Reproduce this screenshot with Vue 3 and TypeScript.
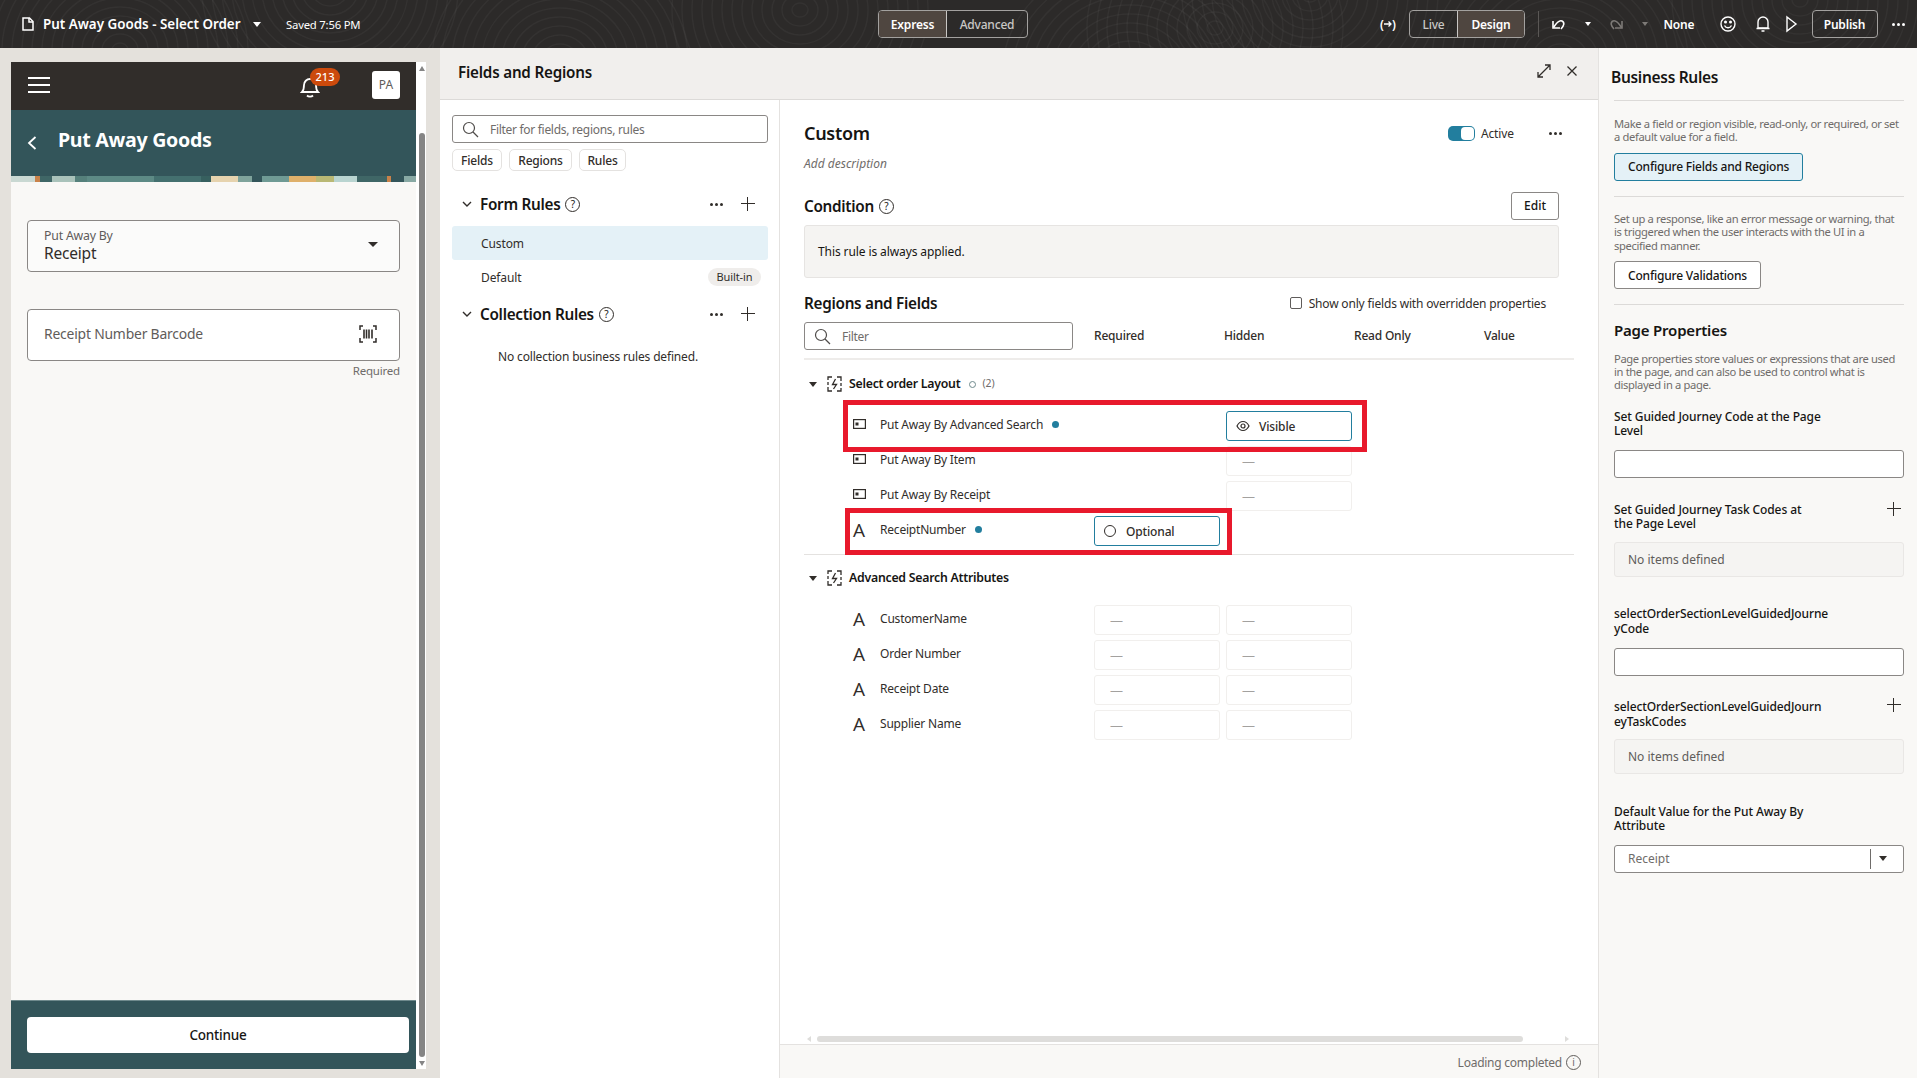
<script setup lang="ts">
type Field = { name: string; kind: 'field' | 'text'; mark?: boolean; required?: string; hidden?: string }

const layoutFields: Field[] = [
  { name: 'Put Away By Advanced Search', kind: 'field', mark: true, hidden: 'Visible' },
  { name: 'Put Away By Item', kind: 'field', hidden: '-' },
  { name: 'Put Away By Receipt', kind: 'field', hidden: '-' },
  { name: 'ReceiptNumber', kind: 'text', mark: true, required: 'Optional' },
]

const searchFields: Field[] = [
  { name: 'CustomerName', kind: 'text', required: '-', hidden: '-' },
  { name: 'Order Number', kind: 'text', required: '-', hidden: '-' },
  { name: 'Receipt Date', kind: 'text', required: '-', hidden: '-' },
  { name: 'Supplier Name', kind: 'text', required: '-', hidden: '-' },
]

// whorls for the header texture
const whorlCenters = [
  [120, 50], [330, -10], [560, 60], [800, 10], [1130, 75], [1215, 28], [1310, -5], [1560, 60], [1800, 0],
]
const whorls = whorlCenters.flatMap(([cx, cy]) =>
  Array.from({ length: 13 }, (_, i) => ({ cx, cy, rx: 8 + i * 10, ry: 7 + i * 9 })),
)

const leaves = [
  { x: 0, w: 24, c: '#c9d8d2' }, { x: 24, w: 5, c: '#c9824a' }, { x: 29, w: 12, c: '#3f6666' },
  { x: 41, w: 23, c: '#a9c2ba' }, { x: 64, w: 12, c: '#55807b' }, { x: 76, w: 67, c: '#5d8a85' },
  { x: 143, w: 47, c: '#44706f' }, { x: 190, w: 10, c: '#37605f' }, { x: 200, w: 27, c: '#e6d3ae' },
  { x: 227, w: 14, c: '#7fa39b' }, { x: 241, w: 10, c: '#33555a' }, { x: 251, w: 27, c: '#6f9a94' },
  { x: 278, w: 27, c: '#dfb06a' }, { x: 305, w: 18, c: '#b9b874' }, { x: 323, w: 23, c: '#b9d4d0' },
  { x: 346, w: 30, c: '#3f6666' }, { x: 376, w: 4, c: '#c9824a' }, { x: 380, w: 13, c: '#33555a' },
  { x: 393, w: 12, c: '#88a9a4' },
]
</script>

<template>
  <div class="app">
    <header class="topbar">
      <svg class="texture" width="1917" height="48">
        <ellipse
          v-for="(w, i) in whorls"
          :key="i"
          :cx="w.cx"
          :cy="w.cy"
          :rx="w.rx"
          :ry="w.ry"
          fill="none"
          stroke="#fff"
          stroke-opacity="0.04"
          stroke-width="1.5"
        />
      </svg>
      <div class="top-left">
        <svg class="doc" width="12" height="14" viewBox="0 0 12 14" fill="none" stroke="#fff" stroke-width="1.5">
          <path d="M1 1h6.5L11 4.5V13H1z" /><path d="M7 1v4h4" />
        </svg>
        <span class="page-name">Put Away Goods - Select Order</span>
        <i class="caret white page-caret"></i>
        <span class="saved">Saved 7:56 PM</span>
      </div>
      <div class="seg mode">
        <span class="seg-on express">Express</span>
        <span class="seg-off advanced">Advanced</span>
      </div>
      <div class="top-right">
        <span class="bracket">(<svg width="8" height="8" viewBox="0 0 8 8" fill="none" stroke="#fff" stroke-width="1.3"><path d="M0 4h7M4.500 1.500L7 4 4.500 6.500" /></svg>)</span>
        <div class="seg view">
          <span class="seg-off live">Live</span>
          <span class="seg-on design">Design</span>
        </div>
        <i class="top-sep"></i>
        <svg class="undo" width="16" height="14" viewBox="0 0 16 14" fill="none" stroke="#fff" stroke-width="1.6">
          <path d="M2 4v7h7" /><path d="M2.500 10.500C6 5 9 3 11 4c3 1.500 2 5-1 8" />
        </svg>
        <i class="caret tiny"></i>
        <svg class="redo" width="16" height="14" viewBox="0 0 16 14" fill="none" stroke="#7d7a77" stroke-width="1.6">
          <path d="M14 4v7H7" /><path d="M13.500 10.500C10 5 7 3 5 4c-3 1.500-2 5 1 8" />
        </svg>
        <i class="caret tiny dim"></i>
        <span class="none">None</span>
        <svg class="smile" width="18" height="18" viewBox="0 0 18 18" fill="none" stroke="#fff" stroke-width="1.4">
          <circle cx="9" cy="9" r="7" /><path d="M5.500 10.500c1.500 3 5.500 3 7 0" />
          <circle cx="6.500" cy="7" r=".8" fill="#fff" /><circle cx="11.500" cy="7" r=".8" fill="#fff" />
        </svg>
        <svg class="bell-top" width="16" height="18" viewBox="0 0 16 18" fill="none" stroke="#fff" stroke-width="1.4">
          <path d="M3 13V7a5 5 0 0 1 10 0v6z" /><path d="M1.500 13.500h13M6.500 16h3" />
        </svg>
        <svg class="play" width="13" height="18" viewBox="0 0 13 18" fill="none" stroke="#fff" stroke-width="1.4">
          <path d="M2 2l9 7-9 7z" />
        </svg>
        <span class="publish">Publish</span>
        <span class="top-dots"><i></i><i></i><i></i></span>
      </div>
    </header>

    <main class="main">
      <section class="preview">
        <div class="phone">
          <div class="phone-main">
            <div class="phone-nav">
              <span class="burger"><i></i><i></i><i></i></span>
              <span class="bell-wrap">
                <svg width="20" height="22" viewBox="0 0 20 22" fill="none" stroke="#fff" stroke-width="1.8">
                  <path d="M2 16c2-2 2-4 2-7a6 6 0 0 1 12 0c0 3 0 5 2 7z" /><path d="M7 19.500c1.500 1.500 4.500 1.500 6 0" />
                </svg>
                <span class="badge">213</span>
              </span>
              <span class="avatar">PA</span>
            </div>
            <div class="phone-title">
              <svg width="10" height="14" viewBox="0 0 10 14" fill="none" stroke="#fff" stroke-width="1.8">
                <path d="M8.500 1L2 7l6.500 6" />
              </svg>
              <span>Put Away Goods</span>
            </div>
            <svg class="leaf-strip" width="405" height="6">
              <rect v-for="l in leaves" :key="l.x" :x="l.x" y="0" :width="l.w" height="6" :fill="l.c" />
            </svg>
            <div class="phone-body">
              <div class="m-field m-select">
                <div>
                  <div class="m-label">Put Away By</div>
                  <div class="m-value">Receipt</div>
                </div>
                <i class="caret dark big"></i>
              </div>
              <div class="m-field m-input">
                <span class="m-place">Receipt Number Barcode</span>
                <svg width="18" height="18" viewBox="0 0 18 18" fill="none" stroke="#312d2a" stroke-width="1.5">
                  <path d="M1 5V1h3M14 1h3v4M1 13v4h3M14 17h3v-4" />
                  <path d="M5 4.500v9M7.500 4.500v9M10 4.500v9M13 4.500v9" stroke-width="1.600" />
                </svg>
              </div>
              <div class="m-req">Required</div>
            </div>
            <div class="phone-foot"><span class="continue">Continue</span></div>
          </div>
          <div class="phone-scroll">
            <i class="arr up"></i>
            <i class="thumb"></i>
            <i class="arr down"></i>
          </div>
        </div>
      </section>

      <section class="fields">
        <div class="fields-head">
          <span class="fields-title">Fields and Regions</span>
          <svg class="expand" width="16" height="16" viewBox="0 0 16 16" fill="none" stroke="#312d2a" stroke-width="1.3">
            <path d="M2 14L14 2M9 2h5v5M2 9v5h5" />
          </svg>
          <svg class="close" width="12" height="12" viewBox="0 0 12 12" fill="none" stroke="#312d2a" stroke-width="1.3">
            <path d="M1.500 1.500l9 9M10.500 1.500l-9 9" />
          </svg>
        </div>
        <div class="fields-body">
          <aside class="rules">
            <div class="search">
              <svg width="17" height="17" viewBox="0 0 17 17" fill="none" stroke="#4f4c4a" stroke-width="1.2">
                <circle cx="7" cy="7" r="5.500" /><path d="M11 11l5 5" />
              </svg>
              <span>Filter for fields, regions, rules</span>
            </div>
            <div class="chips">
              <span class="chip c-fields">Fields</span>
              <span class="chip c-regions">Regions</span>
              <span class="chip c-rules">Rules</span>
            </div>
            <div class="rule-head first">
              <svg width="10" height="7" viewBox="0 0 10 7" fill="none" stroke="#312d2a" stroke-width="1.4"><path d="M1 1l4 4 4-4" /></svg>
              <span class="rule-title">Form Rules</span>
              <span class="help">?</span>
              <span class="dots"><i></i><i></i><i></i></span>
              <span class="plus"></span>
            </div>
            <div class="rule-row active">Custom</div>
            <div class="rule-row">Default <span class="built">Built-in</span></div>
            <div class="rule-head second">
              <svg width="10" height="7" viewBox="0 0 10 7" fill="none" stroke="#312d2a" stroke-width="1.4"><path d="M1 1l4 4 4-4" /></svg>
              <span class="rule-title">Collection Rules</span>
              <span class="help">?</span>
              <span class="dots"><i></i><i></i><i></i></span>
              <span class="plus"></span>
            </div>
            <div class="no-rules">No collection business rules defined.</div>
          </aside>

          <div class="detail">
            <div class="detail-scroll">
              <div class="detail-top">
                <span class="custom-title">Custom</span>
                <span class="toggle"><i></i></span>
                <span class="active-label">Active</span>
                <span class="dots detail-dots"><i></i><i></i><i></i></span>
              </div>
              <div class="add-desc">Add description</div>
              <div class="cond-head">
                <span class="sec-title">Condition</span>
                <span class="help">?</span>
                <span class="edit">Edit</span>
              </div>
              <div class="cond-box">This rule is always applied.</div>
              <div class="reg-head">
                <span class="sec-title">Regions and Fields</span>
                <span class="check"><i></i>Show only fields with overridden properties</span>
              </div>
              <div class="filter-row">
                <div class="search filter">
                  <svg width="17" height="17" viewBox="0 0 17 17" fill="none" stroke="#4f4c4a" stroke-width="1.2">
                    <circle cx="7" cy="7" r="5.500" /><path d="M11 11l5 5" />
                  </svg>
                  <span>Filter</span>
                </div>
                <span class="col">Required</span>
                <span class="col">Hidden</span>
                <span class="col">Read Only</span>
                <span class="col">Value</span>
              </div>

              <div class="tree">
                <div class="group-row">
                  <i class="caret dark"></i>
                  <svg width="15" height="16" viewBox="0 0 15 16" fill="none" stroke="#312d2a" stroke-width="1.3">
                    <path d="M1 4V1h4M10 1h4v4M1 11v4h4M10 15h4v-3M1 6v3M14 7v3" />
                    <path d="M8.500 3L5.500 8.500h4L6.500 13" />
                  </svg>
                  <span class="group-name">Select order Layout</span>
                  <span class="ring"></span>
                  <span class="count">(2)</span>
                </div>
                <div v-for="f in layoutFields" :key="f.name" class="f-row">
                  <div class="f-name">
                    <span class="f-icon">
                      <span v-if="f.kind === 'text'" class="a-icon">A</span>
                      <svg v-else width="13" height="10" viewBox="0 0 13 10" fill="none" stroke="#312d2a" stroke-width="1.2">
                        <rect x=".6" y=".6" width="11.800" height="8.800" /><rect x="2.500" y="3.500" width="3" height="3" fill="#312d2a" stroke="none" />
                      </svg>
                    </span>
                    {{ f.name }}
                    <i v-if="f.mark" class="mark"></i>
                  </div>
                  <div class="cell-wrap">
                    <span v-if="f.required === 'Optional'" class="cell set"><i class="opt-ring"></i>Optional</span>
                  </div>
                  <div class="cell-wrap">
                    <span v-if="f.hidden === 'Visible'" class="cell set">
                      <svg width="14" height="12" viewBox="0 0 14 12" fill="none" stroke="#312d2a" stroke-width="1.2">
                        <path d="M1 6c3-6 9-6 12 0-3 6-9 6-12 0z" /><circle cx="7" cy="6" r="2" />
                      </svg>Visible
                    </span>
                    <span v-else-if="f.hidden" class="cell empty"><b>—</b></span>
                  </div>
                </div>
                <div class="tree-sep"></div>
                <div class="group-row second-group">
                  <i class="caret dark"></i>
                  <svg width="15" height="16" viewBox="0 0 15 16" fill="none" stroke="#312d2a" stroke-width="1.3">
                    <path d="M1 4V1h4M10 1h4v4M1 11v4h4M10 15h4v-3M1 6v3M14 7v3" />
                    <path d="M8.500 3L5.500 8.500h4L6.500 13" />
                  </svg>
                  <span class="group-name">Advanced Search Attributes</span>
                </div>
                <div v-for="f in searchFields" :key="f.name" class="f-row">
                  <div class="f-name">
                    <span class="f-icon"><span class="a-icon">A</span></span>
                    {{ f.name }}
                  </div>
                  <div class="cell-wrap"><span class="cell empty"><b>—</b></span></div>
                  <div class="cell-wrap"><span class="cell empty"><b>—</b></span></div>
                </div>
                <!-- red review annotations over the table -->
                <div class="callout call-a"></div>
                <div class="callout call-b"></div>
              </div>
            </div>
            <div class="h-scroll">
              <i class="h-arrow left"></i>
              <i class="h-thumb"></i>
              <i class="h-arrow right"></i>
            </div>
            <div class="status">
              Loading completed
              <span class="info">i</span>
            </div>
          </div>
        </div>
      </section>

      <aside class="side">
        <h2 class="side-title">Business Rules</h2>
        <div class="side-box">
          <p>Make a field or region visible, read-only, or required, or set a default value for a field.</p>
          <span class="btn primary">Configure Fields and Regions</span>
        </div>
        <div class="side-box">
          <p>Set up a response, like an error message or warning, that is triggered when the user interacts with the UI in a specified manner.</p>
          <span class="btn">Configure Validations</span>
        </div>
        <h2 class="page-props">Page Properties</h2>
        <p class="props-desc">Page properties store values or expressions that are used in the page, and can also be used to control what is displayed in a page.</p>
        <div class="prop-label gj">Set Guided Journey Code at the Page<br />Level</div>
        <div class="prop-input"></div>
        <div class="prop-head first-head">
          <div class="prop-label">Set Guided Journey Task Codes at<br />the Page Level</div>
          <span class="plus"></span>
        </div>
        <div class="no-items">No items defined</div>
        <div class="prop-label wide">selectOrderSectionLevelGuidedJourne<br />yCode</div>
        <div class="prop-input"></div>
        <div class="prop-head">
          <div class="prop-label wide-t">selectOrderSectionLevelGuidedJourn<br />eyTaskCodes</div>
          <span class="plus"></span>
        </div>
        <div class="no-items">No items defined</div>
        <div class="prop-label def">Default Value for the Put Away By<br />Attribute</div>
        <div class="prop-input prop-select">
          <span>Receipt</span>
          <em><i class="caret dark"></i></em>
        </div>
      </aside>
    </main>
  </div>
</template>

<style scoped>
.app {
  width: 1917px;
  height: 1078px;
  display: flex;
  flex-direction: column;
  overflow: hidden;
  font-family: "Noto Sans", "Open Sans", sans-serif;
  font-size: 12px;
  color: #161513;
  background: #fff;
}

i { display: block; font-style: normal; }

.caret {
  width: 0;
  height: 0;
  border-left: 4px solid transparent;
  border-right: 4px solid transparent;
  border-top: 5px solid #fff;
}
.caret.dark { border-top-color: #312d2a; }
.caret.big { border-left-width: 5px; border-right-width: 5px; border-top-width: 5px; }
.caret.tiny { border-left-width: 3px; border-right-width: 3px; border-top-width: 4px; }
.caret.dim { border-top-color: #7d7a77; }

/* top bar */
.topbar {
  position: relative;
  height: 48px;
  flex: none;
  background: #2c2a29;
  color: #fff;
  display: flex;
  align-items: center;
  overflow: hidden;
}
.texture { position: absolute; left: 0; top: 0; }
.top-left, .mode, .top-right { position: relative; }
.top-left { display: flex; align-items: center; width: 878px; padding-left: 22px; box-sizing: border-box; }
.page-name { margin-left: 9px; font-size: 13.400px; font-weight: 600; width: 206px; white-space: nowrap; }
.page-caret { margin-left: 4px; }
.saved { margin-left: 25px; font-size: 11.300px; letter-spacing: -0.2px; }
.seg {
  display: flex;
  height: 28px;
  box-sizing: border-box;
  border: 1px solid #a3a19f;
  border-radius: 4px;
  overflow: hidden;
  font-size: 12px;
  font-weight: 600;
  letter-spacing: -0.2px;
}
.seg span { display: flex; align-items: center; justify-content: center; }
.seg-on { background: #4f4640; color: #fff; }
.seg-off { color: #c9c7c5; font-weight: 500; }
.express { width: 67px; border-right: 1px solid #c9c7c5; }
.advanced { width: 80px; }
.top-right { margin-left: 352px; display: flex; align-items: center; }
.bracket { width: 20px; font-size: 12px; font-weight: 600; white-space: nowrap; display: flex; align-items: center; }
.view { margin-left: 9px; }
.live { width: 47px; }
.design { width: 66px; border-left: 1px solid #c9c7c5; }
.top-sep { width: 1px; height: 26px; background: #5a5755; margin-left: 13px; }
.undo { margin-left: 12px; }
.top-right .caret.tiny { margin-left: 17.500px; }
.redo { margin-left: 17.500px; }
.none { margin-left: 16px; font-size: 12px; font-weight: 600; letter-spacing: -0.2px; width: 32px; }
.smile { margin-left: 23px; }
.bell-top { margin-left: 18px; }
.play { margin-left: 14px; }
.publish {
  margin-left: 14px;
  width: 66px;
  height: 28px;
  border: 1px solid #a3a19f;
  border-radius: 4px;
  box-sizing: border-box;
  display: flex;
  align-items: center;
  justify-content: center;
  font-size: 12px;
  font-weight: 600;
  letter-spacing: -0.2px;
}
.top-dots { margin-left: 14px; display: flex; gap: 2px; }
.top-dots i { width: 3px; height: 3px; border-radius: 50%; background: #fff; }

.main { flex: 1; min-height: 0; display: flex; }

/* mobile preview */
.preview {
  width: 440px;
  flex: none;
  box-sizing: border-box;
  padding: 14px 14px 9px 11px;
  background: #e4e1dc;
  display: flex;
}
.phone { flex: 1; display: flex; min-width: 0; }
.phone-main { width: 405px; display: flex; flex-direction: column; background: #f9f8f6; }
.phone-nav {
  height: 48px;
  flex: none;
  background: #312d2a;
  display: flex;
  align-items: center;
  padding: 0 16px 0 17px;
}
.burger { display: flex; flex-direction: column; gap: 5px; width: 22px; margin-bottom: 2px; }
.burger i { height: 2px; background: #fff; }
.bell-wrap { position: relative; margin-left: 250px; width: 20px; height: 22px; margin-top: 2px; }
.badge {
  position: absolute;
  left: 10px;
  top: -8px;
  width: 30px;
  height: 18px;
  border-radius: 9px;
  background: #cc4a0c;
  font-size: 11px;
  font-weight: 500;
  text-align: center;
  line-height: 18px;
  color: #fff;
}
.avatar {
  margin-left: auto;
  width: 28px;
  height: 28px;
  border-radius: 3px;
  background: #fff;
  color: #5f5c5a;
  font-size: 12px;
  text-align: center;
  line-height: 28px;
  margin-bottom: 2px;
}
.phone-title {
  height: 66px;
  flex: none;
  background: #33555a;
  color: #fff;
  display: flex;
  align-items: center;
  padding-left: 16px;
  font-size: 19.600px;
  font-weight: 700;
  letter-spacing: -0.3px;
}
.phone-title svg { margin-right: 21px; }
.phone-title span { margin-top: -8px; }
.leaf-strip { display: block; flex: none; }
.phone-body { flex: 1; padding: 38px 16px 0; }
.m-field {
  height: 52px;
  box-sizing: border-box;
  border: 1px solid #8a8785;
  border-radius: 4px;
  background: #fff;
  padding: 0 16px;
  display: flex;
  align-items: center;
  justify-content: space-between;
}
.m-select { background: #fbfbfa; }
.m-label { font-size: 12.300px; color: #5f5c5a; line-height: 14px; letter-spacing: -0.2px; }
.m-value { font-size: 15.500px; line-height: 20px; letter-spacing: -0.2px; color: #312d2a; }
.m-select .caret { margin-right: 5px; margin-top: -4px; }
.m-input { margin-top: 37px; }
.m-place { font-size: 13.900px; color: #5f5c5a; letter-spacing: -0.2px; margin-top: -3px; }
.m-input svg { margin-right: 6px; margin-top: -2px; }
.m-req { text-align: right; margin-top: 2px; font-size: 11.500px; color: #6f6c6a; letter-spacing: -0.2px; }
.phone-foot {
  height: 69px;
  flex: none;
  box-sizing: border-box;
  background: #33555a;
  border-top: 1px solid #6f8a8d;
  padding: 16px 7px 0 16px;
}
.continue {
  display: block;
  height: 36px;
  border-radius: 4px;
  background: #fff;
  color: #161513;
  text-align: center;
  line-height: 36px;
  font-size: 13.500px;
  font-weight: 500;
  letter-spacing: -0.2px;
}
.phone-scroll {
  width: 10px;
  background: #fff;
  display: flex;
  flex-direction: column;
  align-items: center;
  padding-top: 4px;
  padding-left: 2px;
  box-sizing: border-box;
}
.thumb { flex: 1; width: 6px; margin: 62px 0 4px; background: #858585; border-radius: 3px; }
.arr { width: 0; height: 0; border-left: 3px solid transparent; border-right: 3px solid transparent; }
.arr.up { border-bottom: 5px solid #858585; }
.arr.down { border-top: 5px solid #858585; margin-bottom: 3px; }

/* fields panel */
.fields { width: 1158px; flex: none; display: flex; flex-direction: column; min-height: 0; }
.fields-head {
  height: 52px;
  flex: none;
  box-sizing: border-box;
  background: #f1efed;
  border-bottom: 1px solid #dcdad8;
  display: flex;
  align-items: center;
  padding-left: 18px;
}
.fields-title { font-size: 15.200px; font-weight: 600; letter-spacing: -0.2px; margin-top: -3px; }
.expand { margin-left: auto; margin-top: -5px; }
.close { margin-left: 14px; margin-right: 20px; margin-top: -5px; }
.fields-body { flex: 1; display: flex; min-height: 0; }

.rules {
  width: 340px;
  flex: none;
  box-sizing: border-box;
  border-right: 1px solid #e4e2e0;
  padding: 15px 11px 0 12px;
}
.search {
  height: 28px;
  box-sizing: border-box;
  border: 1px solid #8a8785;
  border-radius: 3px;
  background: #fff;
  display: flex;
  align-items: center;
  padding-left: 9px;
  font-size: 12px;
  color: #6f6c6a;
  letter-spacing: -0.3px;
}
.search span { margin-left: 11px; }
.chips { display: flex; gap: 7px; margin-top: 6px; }
.chip {
  height: 22px;
  box-sizing: border-box;
  border: 1px solid #e4e2e0;
  border-radius: 5px;
  display: flex;
  align-items: center;
  justify-content: center;
  font-size: 12px;
  font-weight: 500;
  letter-spacing: -0.2px;
  color: #312d2a;
}
.c-fields { width: 50px; }
.c-regions { width: 63px; }
.c-rules { width: 47px; }
.rule-head { display: flex; align-items: center; height: 24px; padding-left: 10px; }
.rule-head.first { margin-top: 21px; }
.rule-head.second { margin-top: 8px; }
.rule-title { margin-left: 8px; font-size: 15.300px; font-weight: 600; letter-spacing: -0.3px; }
.help {
  width: 13px;
  height: 13px;
  margin-left: 5px;
  border: 1px solid #312d2a;
  border-radius: 50%;
  font-size: 10px;
  line-height: 13px;
  text-align: center;
  font-weight: 400;
  flex: none;
}
.dots { display: flex; gap: 2px; }
.dots i { width: 3px; height: 3px; border-radius: 50%; background: #312d2a; }
.rule-head .dots { margin-left: auto; }
.plus {
  position: relative;
  width: 14px;
  height: 14px;
  display: block;
  flex: none;
  background:
    linear-gradient(#312d2a, #312d2a) center / 14px 1.400px no-repeat,
    linear-gradient(#312d2a, #312d2a) center / 1.400px 14px no-repeat;
}
.rule-head .plus { margin-left: 18px; margin-right: 13px; }
.rule-row {
  height: 34px;
  display: flex;
  align-items: center;
  justify-content: space-between;
  padding: 0 7px 0 29px;
  border-radius: 3px;
  font-size: 12px;
  letter-spacing: -0.1px;
  color: #312d2a;
}
.rule-row.active { background: #e4f1f7; margin-top: 10px; }
.built {
  width: 53px;
  height: 18px;
  border-radius: 9px;
  background: #efedeb;
  font-size: 11px;
  text-align: center;
  line-height: 18px;
}
.no-rules { margin-top: 22px; text-align: center; font-size: 12px; letter-spacing: -0.17px; padding-right: 24px; color: #312d2a; }

.detail { flex: 1; min-width: 0; display: flex; flex-direction: column; }
.detail-scroll { flex: 1; min-height: 0; padding: 0 24px 0 24px; }
.detail-top { display: flex; align-items: center; height: 26px; margin-top: 20px; }
.custom-title { font-size: 18px; font-weight: 600; letter-spacing: -0.3px; }
.toggle {
  margin-left: auto;
  width: 27px;
  height: 15px;
  border-radius: 5px;
  background: #227e9e;
  position: relative;
}
.toggle i { position: absolute; right: 1px; top: 1px; width: 13px; height: 13px; border-radius: 4px; background: #fff; }
.active-label { margin-left: 6px; font-size: 12px; letter-spacing: -0.1px; color: #312d2a; }
.detail-dots { margin-left: 35px; margin-right: 12px; }
.add-desc { margin-top: 10px; font-size: 12px; line-height: 16px; font-style: italic; color: #6f6c6a; }
.cond-head { display: flex; align-items: center; height: 28px; margin-top: 20px; margin-right: 15px; }
.sec-title { font-size: 15.300px; font-weight: 600; letter-spacing: -0.3px; }
.edit {
  margin-left: auto;
  width: 48px;
  height: 28px;
  box-sizing: border-box;
  border: 1px solid #8a8785;
  border-radius: 3px;
  font-size: 12px;
  font-weight: 500;
  text-align: center;
  line-height: 26px;
}
.cond-box {
  margin-top: 5px;
  height: 53px;
  box-sizing: border-box;
  border: 1px solid #e6e4e2;
  border-radius: 3px;
  background: #f5f4f2;
  padding-left: 13px;
  display: flex;
  align-items: center;
  font-size: 12px;
  letter-spacing: -0.1px;
  width: 755px;
}
.reg-head { display: flex; align-items: center; height: 22px; margin-top: 14px; }
.check { margin-left: auto; display: flex; align-items: center; font-size: 12px; letter-spacing: -0.17px; color: #312d2a; margin-right: 28px; }
.check i { width: 12px; height: 12px; box-sizing: border-box; border: 1.500px solid #5f5c5a; border-radius: 2px; margin-right: 7px; }
.filter-row {
  display: flex;
  align-items: center;
  margin-top: 8px;
  padding-bottom: 8px;
  border-bottom: 2px solid #eeecea;
}
.search.filter { width: 269px; flex: none; }
.col { width: 130px; font-size: 12px; font-weight: 500; letter-spacing: -0.2px; color: #312d2a; flex: none; margin-bottom: 2px; }
.col:nth-child(2) { margin-left: 21px; }
.tree { position: relative; padding-top: 10px; }
.group-row { display: flex; align-items: center; height: 28px; padding-left: 5px; }
.group-row svg { margin-left: 10px; }
.group-name { margin-left: 7px; font-size: 12.300px; font-weight: 600; letter-spacing: -0.25px; margin-bottom: 2px; }
.ring { width: 7px; height: 7px; box-sizing: border-box; border: 1px solid #6f8a8d; border-radius: 50%; margin-left: 9px; }
.count { margin-left: 6px; font-size: 10.500px; color: #6f6c6a; margin-bottom: 2px; }
.f-row { display: grid; grid-template-columns: 284px 126px 126px; column-gap: 6px; height: 35px; }
.f-name { display: flex; align-items: center; padding-left: 49px; font-size: 12px; letter-spacing: -0.2px; color: #312d2a; height: 26px; }
.f-icon { width: 27px; flex: none; display: flex; align-items: center; }
.a-icon { font-size: 19px; font-weight: 400; line-height: 1; color: #312d2a; margin-top: 2px; font-family: "Open Sans", sans-serif; }
.mark { width: 7px; height: 7px; border-radius: 50%; background: #227e9e; margin-left: 9px; }
.cell-wrap { height: 30px; }
.group-row + .f-row { margin-top: 13px; }
.cell {
  width: 126px;
  height: 30px;
  box-sizing: border-box;
  display: flex;
  align-items: center;
  border-radius: 3px;
  font-size: 12px;
  letter-spacing: -0.15px;
  padding-left: 9px;
}
.cell svg { margin-right: 9px; }
.cell.set { border: 1px solid #227e9e; background: #fff; font-weight: 500; color: #312d2a; }
.cell.empty { border: 1px solid #f1efed; padding-left: 15px; }
.cell.empty b { color: #a3a19f; font-weight: 400; font-size: 13px; }
.opt-ring { width: 12px; height: 12px; box-sizing: border-box; border: 1.300px solid #312d2a; border-radius: 50%; margin-right: 10px; }
.tree-sep { height: 1px; background: #e4e2e0; margin-top: 3px; }
.second-group { margin-top: 9px; }
.callout {
  position: absolute;
  box-sizing: border-box;
  border: 5px solid #e8192c;
  pointer-events: none;
}
.call-a { left: 39px; top: 40px; width: 524px; height: 52px; }
.call-b { left: 41px; top: 148px; width: 387px; height: 47px; }

.h-scroll { flex: none; height: 9px; position: relative; display: flex; align-items: center; padding: 0 29px 0 27px; margin-bottom: 1px; gap: 6px; }
.h-thumb { width: 706px; height: 6px; border-radius: 3px; background: #dedddb; }
.h-arrow { width: 0; height: 0; border-top: 3px solid transparent; border-bottom: 3px solid transparent; }
.h-arrow.left { border-right: 4px solid #dedddb; }
.h-arrow.right { border-left: 4px solid #dedddb; margin-left: auto; }
.status {
  flex: none;
  height: 34px;
  box-sizing: border-box;
  border-top: 1px solid #e4e2e0;
  background: #f9f8f6;
  display: flex;
  align-items: center;
  justify-content: flex-end;
  padding: 1px 17px 0 0;
  font-size: 12px;
  letter-spacing: -0.25px;
  color: #6f6c6a;
}
.info {
  width: 13px;
  height: 13px;
  margin-left: 4px;
  border: 1px solid #5f5c5a;
  border-radius: 50%;
  font-size: 10px;
  line-height: 13px;
  text-align: center;
}

/* right side */
.side {
  flex: 1;
  min-width: 0;
  box-sizing: border-box;
  background: #f9f8f6;
  border-left: 1px solid #e4e2e0;
  padding: 0 13px 0 15px;
}
.side-title { margin: 19px 0 0 -3px; font-size: 15.500px; line-height: 20px; font-weight: 600; letter-spacing: -0.3px; }
.side-box { border-top: 1px solid #dcdad8; margin-top: 0; padding-bottom: 15px; }
.side-title + .side-box { margin-top: 13px; }
.side-box p { margin: 16px 0 9px; font-size: 11.200px; line-height: 13.400px; letter-spacing: -0.36px; color: #6f6c6a; }
.btn {
  display: inline-flex;
  align-items: center;
  height: 28px;
  box-sizing: border-box;
  border: 1px solid #8a8785;
  border-radius: 3px;
  padding: 0 13px;
  font-size: 12px;
  font-weight: 500;
  letter-spacing: -0.2px;
  background: #fff;
}
.btn.primary { background: #e4f1f7; border-color: #227e9e; }
.side-box + .side-box p { margin-top: 15px; }
.page-props { margin: 0; padding-top: 15px; border-top: 1px solid #dcdad8; font-size: 15px; line-height: 20px; font-weight: 600; letter-spacing: -0.2px; }
.props-desc { margin: 12px 0 0; font-size: 11.200px; line-height: 13px; letter-spacing: -0.36px; color: #6f6c6a; }
.prop-label { font-size: 12px; line-height: 14px; font-weight: 500; letter-spacing: -0.1px; color: #161513; }
.prop-label.gj { margin-top: 19px; }
.prop-input { margin-top: 12px; height: 28px; box-sizing: border-box; border: 1px solid #8a8785; border-radius: 3px; background: #fff; }
.prop-head { display: flex; justify-content: space-between; margin-top: 23px; align-items: flex-start; }
.prop-head.first-head { margin-top: 25px; }
.prop-head .plus { margin-top: -1px; margin-right: 3px; }
.no-items {
  margin-top: 10.500px;
  height: 35px;
  box-sizing: border-box;
  border: 1px solid #e9e7e5;
  border-radius: 3px;
  background: #f5f4f2;
  padding-left: 13px;
  display: flex;
  align-items: center;
  font-size: 12px;
  color: #5f5c5a;
}
.prop-label.wide { margin-top: 29px; line-height: 15px; }
.prop-label.wide-t { line-height: 15px; }
.prop-label.def { margin-top: 30.500px; }
.prop-select { display: flex; align-items: center; justify-content: space-between; padding-left: 13px; font-size: 12px; color: #6f6c6a; }
.prop-select em { width: 33px; height: 20px; border-left: 1px solid #6f6c6a; display: flex; align-items: center; justify-content: center; padding-right: 8px; box-sizing: border-box; }
</style>

<style>
html, body { margin: 0; background: #fff; }
</style>
